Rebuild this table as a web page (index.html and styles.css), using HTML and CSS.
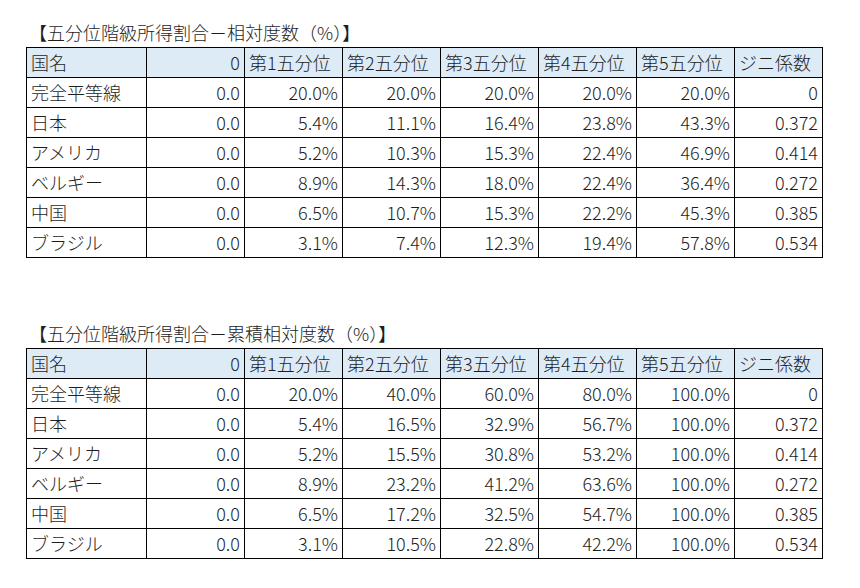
FILE: index.html
```html
<!DOCTYPE html>
<html lang="ja">
<head>
<meta charset="utf-8">
<link rel="stylesheet" href="styles.css">
</head>
<body>
<div class="sheet">
  <section class="block">
    <div class="title">【五分位階級所得割合－相対度数（%）】</div>
    <table class="grid">
      <colgroup>
        <col class="c-name"><col class="c-q"><col class="c-q"><col class="c-q"><col class="c-q"><col class="c-q"><col class="c-q"><col class="c-g">
      </colgroup>
      <thead>
        <tr><th class="l">国名</th><th class="r">0</th><th class="l">第1五分位</th><th class="l">第2五分位</th><th class="l">第3五分位</th><th class="l">第4五分位</th><th class="l">第5五分位</th><th class="l">ジニ係数</th></tr>
      </thead>
      <tbody>
        <tr><td class="l">完全平等線</td><td>0.0</td><td>20.0%</td><td>20.0%</td><td>20.0%</td><td>20.0%</td><td>20.0%</td><td>0</td></tr>
        <tr><td class="l">日本</td><td>0.0</td><td>5.4%</td><td>11.1%</td><td>16.4%</td><td>23.8%</td><td>43.3%</td><td>0.372</td></tr>
        <tr><td class="l">アメリカ</td><td>0.0</td><td>5.2%</td><td>10.3%</td><td>15.3%</td><td>22.4%</td><td>46.9%</td><td>0.414</td></tr>
        <tr><td class="l">ベルギー</td><td>0.0</td><td>8.9%</td><td>14.3%</td><td>18.0%</td><td>22.4%</td><td>36.4%</td><td>0.272</td></tr>
        <tr><td class="l">中国</td><td>0.0</td><td>6.5%</td><td>10.7%</td><td>15.3%</td><td>22.2%</td><td>45.3%</td><td>0.385</td></tr>
        <tr><td class="l">ブラジル</td><td>0.0</td><td>3.1%</td><td>7.4%</td><td>12.3%</td><td>19.4%</td><td>57.8%</td><td>0.534</td></tr>
      </tbody>
    </table>
  </section>
  <section class="block second">
    <div class="title">【五分位階級所得割合－累積相対度数（%）】</div>
    <table class="grid">
      <colgroup>
        <col class="c-name"><col class="c-q"><col class="c-q"><col class="c-q"><col class="c-q"><col class="c-q"><col class="c-q"><col class="c-g">
      </colgroup>
      <thead>
        <tr><th class="l">国名</th><th class="r">0</th><th class="l">第1五分位</th><th class="l">第2五分位</th><th class="l">第3五分位</th><th class="l">第4五分位</th><th class="l">第5五分位</th><th class="l">ジニ係数</th></tr>
      </thead>
      <tbody>
        <tr><td class="l">完全平等線</td><td>0.0</td><td>20.0%</td><td>40.0%</td><td>60.0%</td><td>80.0%</td><td>100.0%</td><td>0</td></tr>
        <tr><td class="l">日本</td><td>0.0</td><td>5.4%</td><td>16.5%</td><td>32.9%</td><td>56.7%</td><td>100.0%</td><td>0.372</td></tr>
        <tr><td class="l">アメリカ</td><td>0.0</td><td>5.2%</td><td>15.5%</td><td>30.8%</td><td>53.2%</td><td>100.0%</td><td>0.414</td></tr>
        <tr><td class="l">ベルギー</td><td>0.0</td><td>8.9%</td><td>23.2%</td><td>41.2%</td><td>63.6%</td><td>100.0%</td><td>0.272</td></tr>
        <tr><td class="l">中国</td><td>0.0</td><td>6.5%</td><td>17.2%</td><td>32.5%</td><td>54.7%</td><td>100.0%</td><td>0.385</td></tr>
        <tr><td class="l">ブラジル</td><td>0.0</td><td>3.1%</td><td>10.5%</td><td>22.8%</td><td>42.2%</td><td>100.0%</td><td>0.534</td></tr>
      </tbody>
    </table>
  </section>
</div>
</body>
</html>
```

FILE: styles.css
```css
html, body {
  margin: 0;
  padding: 0;
  background: #ffffff;
}
body {
  font-family: "Noto Sans CJK JP", "Noto Sans", sans-serif;
  font-size: 18px;
  font-weight: 300;
  color: #1e1e1e;
}
.sheet {
  padding: 17px 0 0 26px;
}
.block.second {
  margin-top: 60px;
}
.title {
  height: 30px;
  line-height: 30px;
  padding-left: 3px;
  white-space: nowrap;
}
.grid {
  border-collapse: separate;
  border-spacing: 0;
  table-layout: fixed;
  width: 796px;
  border-left: 1px solid #000;
  border-top: 1px solid #000;
}
.c-name { width: 120px; }
.c-q { width: 98px; }
.c-g { width: 88px; }
.grid th, .grid td {
  box-sizing: border-box;
  height: 30px;
  padding: 0 4px 0 4px;
  border-right: 1px solid #000;
  border-bottom: 1px solid #000;
  font-weight: 300;
  line-height: 29px;
  white-space: nowrap;
  overflow: hidden;
  text-align: right;
}
.grid th {
  background: #ddebf7;
}
.grid .l {
  text-align: left;
}
.grid .r {
  text-align: right;
}
```
